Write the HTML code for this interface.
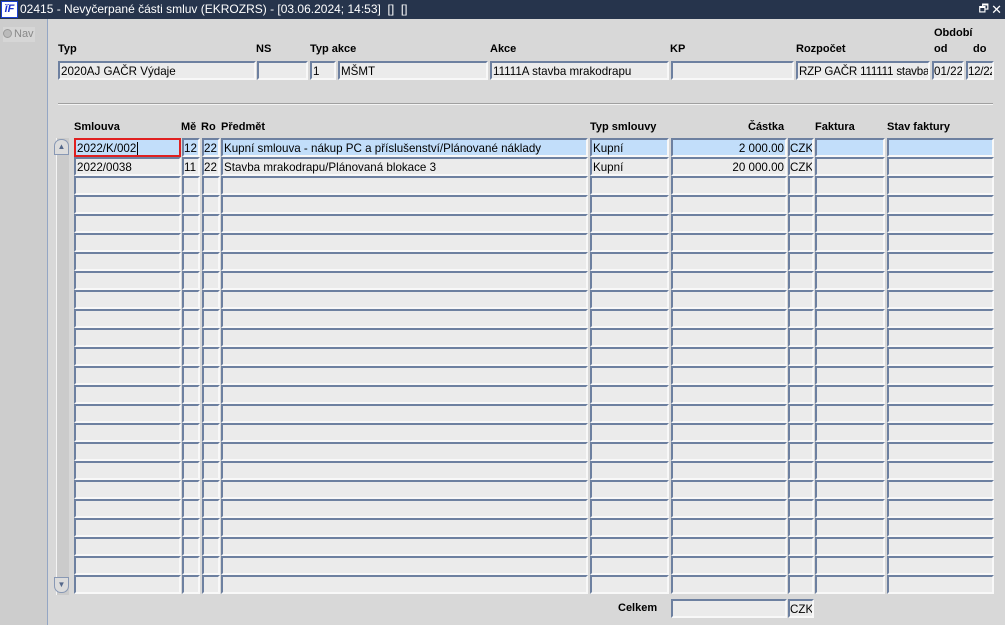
<!DOCTYPE html>
<html><head><meta charset="utf-8">
<style>
*{margin:0;padding:0;box-sizing:border-box}
body{width:1005px;height:625px;overflow:hidden;background:#d8d8d8;font-family:"Liberation Sans",Arial,sans-serif;font-size:11px;color:#000;position:relative}
#title{position:absolute;left:0;top:0;width:1005px;height:19px;background:#26344c;color:#fff;font-size:12px;line-height:19px;padding-left:20px}
#logo{position:absolute;left:1px;top:1px;width:17px;height:17px;background:#fff;border:1px solid #1a3fd0;color:#1a2fd0;font-weight:bold;font-style:italic;font-size:11px;line-height:15px;text-align:center}
#left{position:absolute;left:0;top:19px;width:48px;height:606px;background:#cdcdcd;border-right:1px solid #94a6c4}
.f{position:absolute;height:19px;background:#ebebeb;border-top:2px solid #6d80a0;border-left:2px solid #6d80a0;border-bottom:2px solid #f8f8f8;border-right:2px solid #f8f8f8;line-height:17px;padding-left:1px;white-space:nowrap;overflow:hidden;font-size:11.6px}
.sel{background:#c2defa}
.l{position:absolute;font-weight:bold;font-size:11px;white-space:nowrap}
</style></head><body>
<div id="title"><div id="logo">ĭF</div>02415 - Nevyčerpané části smluv (EKROZRS) - [03.06.2024; 14:53] &nbsp;[] &nbsp;[]
<span style="position:absolute;right:16px;top:0;font-size:11px">🗗</span><span style="position:absolute;right:3px;top:0;font-size:13px">✕</span></div>
<div id="left"><div style="position:absolute;left:3px;top:8px;width:32px;height:15px;background:#d6d6d6;color:#888;font-size:11px;line-height:15px"><span style="display:inline-block;width:9px;height:9px;border-radius:50%;background:#bbb;border:1px solid #999;vertical-align:-1px;margin-right:2px"></span>Nav</div></div>

<div class="l" style="left:934px;top:27px">Období</div>
<div class="l" style="left:58px;top:43px">Typ</div>
<div class="l" style="left:256px;top:43px">NS</div>
<div class="l" style="left:310px;top:43px">Typ akce</div>
<div class="l" style="left:490px;top:43px">Akce</div>
<div class="l" style="left:670px;top:43px">KP</div>
<div class="l" style="left:796px;top:43px">Rozpočet</div>
<div class="l" style="left:934px;top:43px">od</div>
<div class="l" style="left:973px;top:43px">do</div>

<div style="position:absolute;left:58px;top:103px;width:935px;height:2px;border-top:1px solid #a0a0a0;border-bottom:1px solid #f4f4f4"></div>

<div class="l" style="left:74px;top:121px">Smlouva</div>
<div class="l" style="left:181px;top:121px">Mě</div>
<div class="l" style="left:201px;top:121px">Ro</div>
<div class="l" style="left:221px;top:121px">Předmět</div>
<div class="l" style="left:590px;top:121px">Typ smlouvy</div>
<div class="l" style="left:748px;top:121px">Částka</div>
<div class="l" style="left:815px;top:121px">Faktura</div>
<div class="l" style="left:887px;top:121px">Stav faktury</div>

<div style="position:absolute;left:56px;top:138px;width:13px;height:457px;background:#cbcbcb;border-left:1px solid #f4f4f4"></div>
<div style="position:absolute;left:54px;top:139px;width:15px;height:16px;background:#dcdcdc;border:1px solid #8898b4;border-radius:7px 7px 0 0;color:#55688a;font-size:8px;text-align:center;line-height:14px">▲</div>
<div style="position:absolute;left:54px;top:577px;width:15px;height:16px;background:#dcdcdc;border:1px solid #8898b4;border-radius:0 0 7px 7px;color:#55688a;font-size:8px;text-align:center;line-height:14px">▼</div>

<div class="l" style="left:618px;top:602px">Celkem</div>

<div id="c"></div>
<script>
var h='';
function f(x,y,w,t,cls,st){h+='<div class="f '+(cls||'')+'" style="left:'+x+'px;top:'+y+'px;width:'+w+'px;'+(st||'')+'">'+(t||'')+'</div>';}
f(58,61,198,'2020AJ GAČR Výdaje');f(257,61,51);f(310,61,26,'1');f(338,61,150,'MŠMT');
f(490,61,179,'11111A stavba mrakodrapu');f(671,61,123);f(796,61,134,'RZP GAČR 111111 stavba','','letter-spacing:-0.2px');
f(932,61,32,'01/22','','padding-left:0');f(966,61,28,'12/22','','padding-left:0;letter-spacing:-0.3px');
var cols=[[74,107],[182,18],[202,18],[221,367],[590,79],[671,116],[788,26],[815,70],[887,107]];
var d=[['2022/K/002','12','22','Kupní smlouva - nákup PC a příslušenství/Plánované náklady','Kupní','2 000.00','CZK','',''],
['2022/0038','11','22','Stavba mrakodrapu/Plánovaná blokace 3','Kupní','20 000.00','CZK','','']];
for(var r=0;r<24;r++){var y=138+r*19;
for(var c=0;c<cols.length;c++){var t=d[r]?d[r][c]:'';var st=(c==5)?'text-align:right;padding-right:1px':(c==6||c==1||c==2)?'padding-left:0':'';
var cls=r==0?'sel':'';
if(r==0&&c==0){st='border:2px solid #e02020;background:#c2defa';t='2022/K/002<span style="border-left:1px solid #000;margin-left:1px"></span>';}
f(cols[c][0],y,cols[c][1],t,cls,st);}}
f(671,599,116);f(788,599,26,'CZK','','padding-left:0');
document.getElementById('c').innerHTML=h;
</script>
</body></html>
